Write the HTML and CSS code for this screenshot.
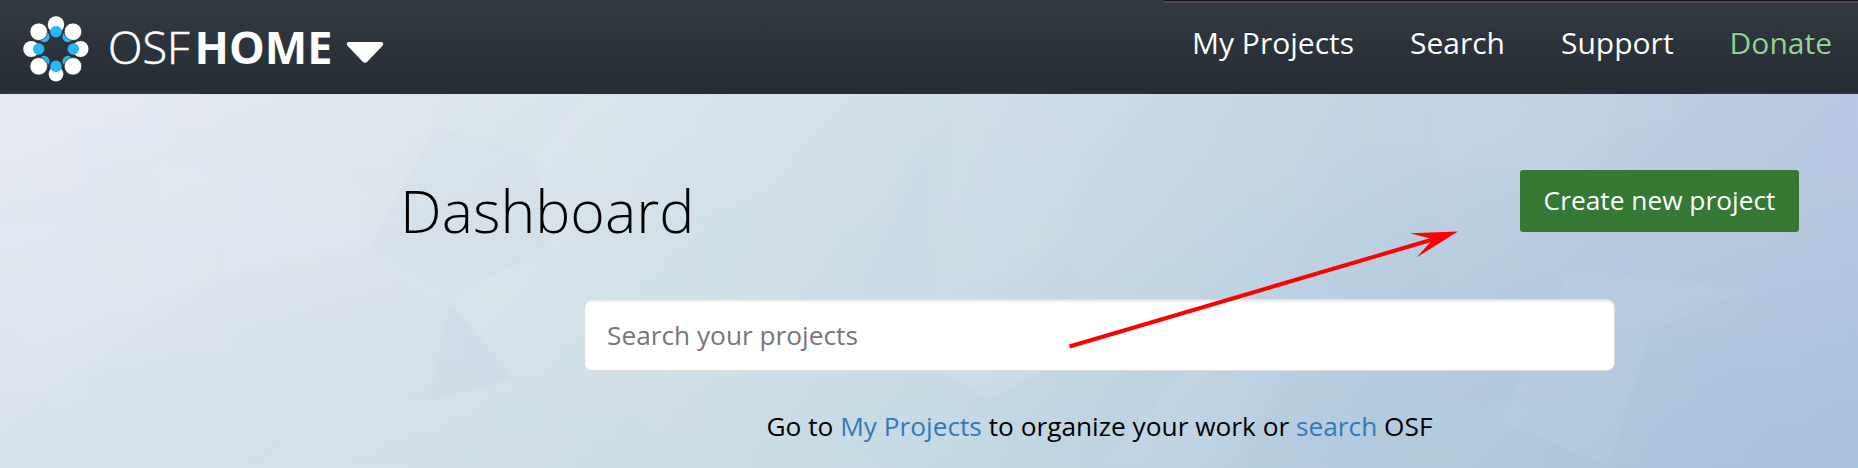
FILE: index.html
```html
<!DOCTYPE html>
<html lang="en">
<head>
<meta charset="utf-8">
<title>OSF Home</title>
<link rel="stylesheet" href="styles.css">
</head>
<body>
<header class="navbar">
  <a class="brand">
    <svg class="brand-logo" width="68" height="68" viewBox="-34 -34 68 68">
      <g fill="#fff">
        <circle cy="-24.600" r="8.2"/><circle cy="25" r="7.4"/>
        <circle cx="-24.800" r="8"/><circle cx="24.500" r="8"/>
      </g>
      <g fill="#29b7f0">
        <circle cx="-11.8" cy="-12.2" r="5.4"/><circle cx="11.8" cy="-12.2" r="5.4"/>
        <circle cx="-11.8" cy="12.2" r="5.4"/><circle cx="11.8" cy="12.2" r="5.4"/>
        <circle cy="-17.3" r="5.8"/><circle cy="17.3" r="5.8"/>
        <circle cx="-17.3" r="5.8"/><circle cx="17.3" r="5.8"/>
      </g>
      <g fill="#fff" stroke="#2d343b" stroke-width=".8">
        <circle cx="-17.3" cy="-17.3" r="8.8"/><circle cx="17" cy="-17.3" r="8.8"/>
        <circle cx="-17.3" cy="17.3" r="8.8"/><circle cx="17" cy="17.3" r="8.8"/>
      </g>
    </svg>
    <span class="brand-org">OSF</span><span class="brand-service">HOME</span>
    <svg class="brand-caret" width="38" height="22" viewBox="0 0 38 22"><path d="M2.500 0H35.500Q38.500 1.200 36.500 3.800L21.500 19.500Q19 22.200 16.500 19.500L1.500 3.800Q-.5 1.200 2.500 0Z" fill="#fff"/></svg>
  </a>
  <nav class="nav">
    <a class="nav-link">My Projects</a>
    <a class="nav-link">Search</a>
    <a class="nav-link">Support</a>
    <a class="nav-link donate">Donate</a>
  </nav>
  <div class="navbar-edge"></div>
</header>
<main class="dashboard">
  <svg class="facets" viewBox="0 94 1858 374" preserveAspectRatio="none">
    <g class="facet-light">
      <path d="M0 94H200L155 155L45 153L0 170Z"/>
      <path d="M235 170L365 190V245L220 275Z" opacity=".6"/>
      <path d="M0 220L155 221V160L235 170L215 278L105 348L60 380L0 320Z" opacity=".4"/>
      <path d="M960 94H1150L1090 150L1040 270L930 320Z" opacity=".5"/>
      <path d="M1250 290L1300 350L1230 468H1100Z" opacity=".5"/>
      <path d="M940 370H1040L990 400Z"/>
      <path d="M1570 270L1750 290L1650 330L1610 468L1500 420Z" opacity=".4"/>
      <path d="M1430 94H1620L1600 180L1440 165Z" opacity=".3"/>
    </g>
    <g class="facet-blue">
      <path d="M448 300L515 378L430 400Z"/>
      <path d="M860 290L929 140V290L900 300Z" opacity=".5"/>
      <path d="M1260 370H1535L1500 400L1400 468H1210Z" opacity=".5"/>
      <path d="M1700 94H1858V180L1750 165L1600 300L1560 268L1640 160Z" opacity=".7"/>
      <path d="M1420 295L1545 270L1600 300L1640 380H1440Z" opacity=".5"/>
      <path d="M1800 405L1858 250V468H1740Z" opacity=".45"/>
    </g>
    <g class="facet-teal">
      <path d="M105 357L280 347L325 407L260 468H0V430L60 385Z"/>
      <path d="M325 407L515 383L590 372L690 468H260Z" opacity=".4"/>
      <path d="M540 250L750 205L740 300H585V372L517 383Z" opacity=".5"/>
      <path d="M440 94H590L530 155L435 130Z" opacity=".6"/>
      <path d="M1000 430L1180 468H900L850 440Z"/>
      <path d="M1410 403L1535 404L1470 468H1390Z"/>
      <path d="M820 372H930L960 410L850 468H760Z" opacity=".7"/>
    </g>
    <g class="facet-dark">
      <path d="M435 128L535 155L545 250L450 298L370 248Z"/>
      <path d="M220 278L370 252L445 300L430 398L325 405L280 347L105 357Z" opacity=".45"/>
      <path d="M1075 245L1075 300H930Z" opacity=".5"/>
      <path d="M1660 330L1800 400L1740 468H1600Z" opacity=".6"/>
      <path d="M1340 130L1440 165V300L1290 290Z" opacity=".4"/>
    </g>
  </svg>
  <section class="title-row">
    <h1 class="title">Dashboard</h1>
    <button class="create-button">Create new project</button>
  </section>
  <input class="search-field" type="text" placeholder="Search your projects">
  <p class="hint">Go to <a class="hint-link">My Projects</a> to organize your work or <a class="hint-link">search</a> OSF</p>
</main>
<svg class="arrow" width="400" height="130" viewBox="1063 225 400 130">
  <path d="M1069.500 346.500L1436 238.500" stroke="#f00" stroke-width="4" fill="none"/>
  <path d="M1458 231.500L1410 233.300L1433 239.300L1416.500 257.500Z" fill="#f00"/>
</svg>
</body>
</html>
```
FILE: styles.css
```css
* { box-sizing: border-box; }
body {
  margin: 0;
  width: 1858px;
  height: 468px;
  overflow: hidden;
  position: relative;
  font-family: "Open Sans", "Noto Sans", sans-serif;
  color: #000;
}
.navbar {
  position: relative;
  display: flex;
  justify-content: space-between;
  height: 94px;
  background: linear-gradient(#333a42, #252c33);
}
.navbar-edge {
  position: absolute;
  top: 0;
  right: 0;
  width: 694px;
  height: 3px;
  background: #484d56;
  border-top: 1px solid #170f10;
}
.brand {
  display: flex;
  align-items: flex-start;
  padding-left: 22px;
  color: #fff;
  font-size: 45px;
  line-height: 60px;
}
.brand-logo { margin-top: 15px; }
.brand-org {
  font-weight: 300;
  margin: 17px 0 0 18px;
  -webkit-text-stroke: .6px #fff;
}
.brand-service { font-weight: 700; margin: 17px 0 0 5px; }
.brand-caret { margin: 42px 0 0 14px; }
.nav {
  display: flex;
  gap: 56px;
  padding: 22px 26px 0 0;
}
.nav-link {
  color: #fff;
  font-size: 30px;
  line-height: 42px;
  white-space: nowrap;
  text-shadow: 0 -1px 0 rgba(0, 0, 0, .3);
}
.donate { color: #93d494; }
.dashboard {
  position: relative;
  height: 374px;
  background:
    radial-gradient(ellipse 1000px 360px at 100% 100%, rgba(150, 185, 212, .5), rgba(150, 185, 212, 0)),
    linear-gradient(to bottom, rgba(165, 200, 215, 0), rgba(165, 200, 215, .2)),
    linear-gradient(to right, #e5e9f2 0%, #dee6ed 25%, #d0dfe9 50%, #c4d5e4 72%, #bbc9e2 100%);
}
.facets {
  position: absolute;
  inset: 0;
  width: 100%;
  height: 100%;
  filter: blur(2px);
  opacity: .6;
}
.facet-light { fill: rgba(231, 238, 248, .3); }
.facet-blue { fill: rgba(175, 195, 232, .25); }
.facet-teal { fill: rgba(180, 220, 225, .22); }
.facet-dark { fill: rgba(165, 190, 215, .15); }
.title-row {
  position: relative;
  display: flex;
  justify-content: space-between;
  align-items: flex-start;
  height: 206px;
  padding: 76px 59px 0 400px;
}
.title {
  margin: -2px 0 0;
  font-size: 59px;
  font-weight: 300;
  line-height: 84px;
}
.create-button {
  width: 279px;
  height: 62px;
  padding: 0 0 2px;
  border: 0;
  border-radius: 3px;
  background: #357935;
  color: #fff;
  font: 26.3px/60px "Open Sans", "Noto Sans", sans-serif;
}
.search-field {
  position: relative;
  display: block;
  width: 1031px;
  height: 72px;
  margin: -1px 0 0 584px;
  padding: 0 22px;
  border: 1px solid #ddd;
  border-radius: 8px;
  background: #fff;
  box-shadow: inset 0 2px 2px rgba(0, 0, 0, .08);
  font: 26.25px "Open Sans", "Noto Sans", sans-serif;
}
.search-field::placeholder { color: #777; opacity: 1; }
.hint {
  position: relative;
  margin: 35px 0 0 766.5px;
  font-size: 26.25px;
  line-height: 40px;
  white-space: nowrap;
}
.hint-link { color: #337ab7; }
.arrow {
  position: absolute;
  left: 1063px;
  top: 225px;
}
```
